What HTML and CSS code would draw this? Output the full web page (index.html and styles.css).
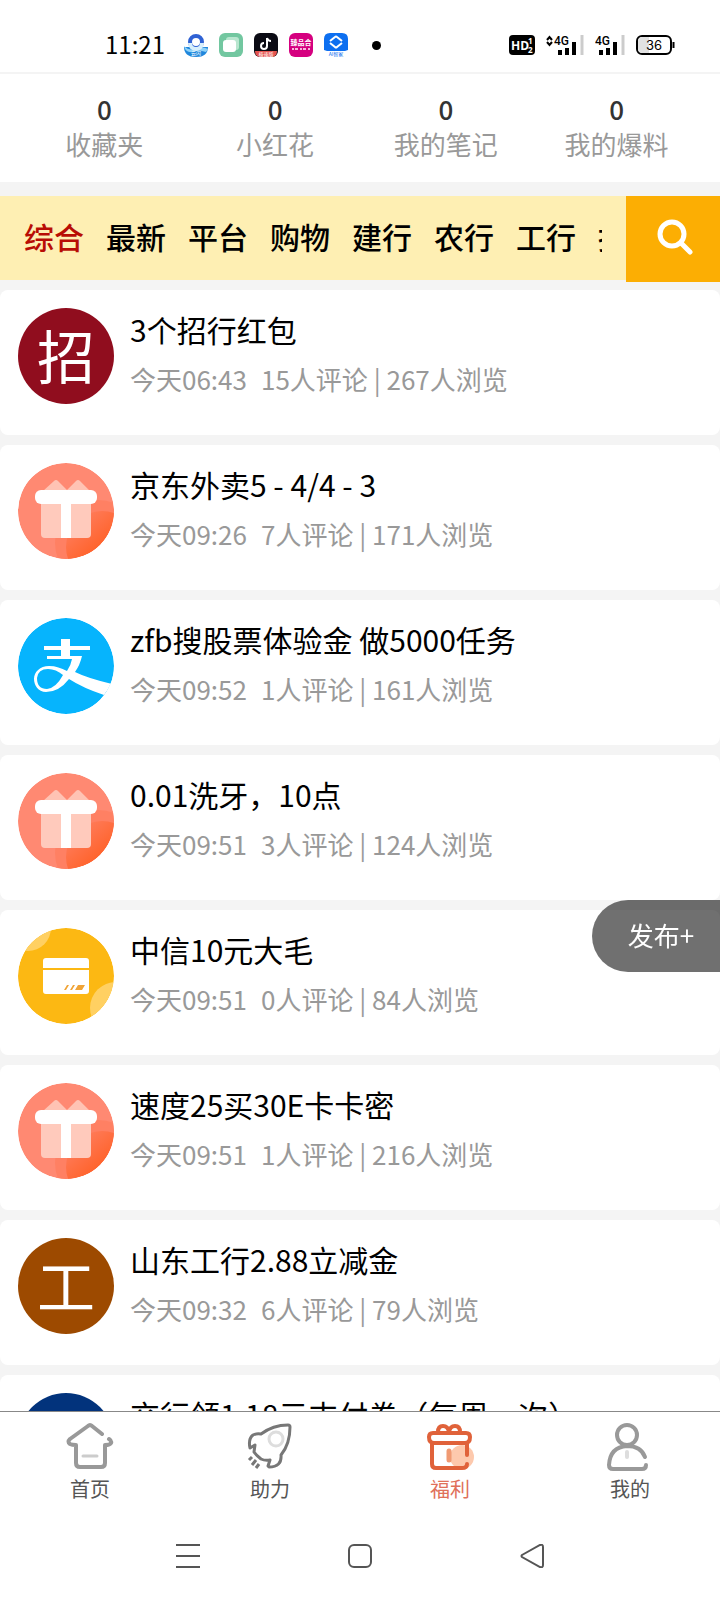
FILE: index.html
```
<!DOCTYPE html>
<html lang="zh-CN">
<head>
<meta charset="utf-8">
<meta name="viewport" content="width=device-width, initial-scale=1">
<title>福利</title>
<link rel="stylesheet" href="styles.css">
</head>
<body>
<svg class="defs" width="0" height="0" aria-hidden="true">
  <linearGradient id="warm" gradientUnits="userSpaceOnUse" x1="56" y1="52" x2="84" y2="84"><stop offset="0" stop-color="#ff8063"/><stop offset="1" stop-color="#ff6229"/></linearGradient>
  <symbol id="gift" viewBox="0 0 96 96">
    <clipPath id="disc"><circle cx="48" cy="48" r="48"/></clipPath>
    <g clip-path="url(#disc)">
      <rect width="96" height="96" fill="#ff8972"/>
      <circle cx="80" cy="80" r="43" fill="#ff8063"/>
      <circle cx="84" cy="84" r="36" fill="url(#warm)"/>
    </g>
    <path d="M25 28 36 18q2-2 4 0l9 9 9-9q2-2 4 0l10 10z" fill="#ffc3b4"/>
    <path d="M23 40h50v31q0 4-4 4H27q-4 0-4-4z" fill="#ffcabc"/>
    <rect x="17" y="27" width="62" height="14" rx="6" fill="#fff"/>
    <path d="M43 40h10v35H43z" fill="#fff"/>
  </symbol>
</svg>
<div class="app">
  <header class="status">
    <time class="clock">11:21</time>
    <div class="apps">
      <svg width="24" height="24" viewBox="0 0 24 24"><path d="M0 14h24q0 10-12 10T0 14z" fill="#1f87dc"/><path d="M0 13q5 5 11 3 8-3 13 0l-2 3q-9-3-12 0-6 1-9-3z" fill="#8fd2f8"/><circle cx="12" cy="9" r="6" fill="none" stroke="#2f62d4" stroke-width="4"/><path d="M6 10a6 6 0 0 0 12 0" fill="none" stroke="#d7effc" stroke-width="4"/><text x="12" y="22" class="tiny">云闪</text></svg>
      <svg width="24" height="24" viewBox="0 0 24 24"><rect width="24" height="24" rx="6" fill="#72c7a0"/><rect x="7" y="4" width="13" height="13" rx="3" fill="#b8e6cf"/><rect x="4" y="7" width="13" height="12" rx="3" fill="#fff"/></svg>
      <svg width="24" height="24" viewBox="0 0 24 24"><rect width="24" height="24" rx="6" fill="#0b0b14"/><path d="M1 18h22q0 6-6 6H7q-6 0-6-6z" fill="#e5544f"/><path d="M13 5v8a3 3 0 1 1-3-3M13 5q1 3 4 3" fill="none" stroke="#fff" stroke-width="2"/><text x="12" y="23" class="tiny">极速版</text></svg>
      <svg width="24" height="24" viewBox="0 0 24 24"><rect width="24" height="24" rx="6" fill="#d5007f"/><text x="12" y="12" class="small">臻品合</text><path d="M3 16h18" stroke="#f7b8dc" stroke-width="2" stroke-dasharray="2 1 3 2"/></svg>
      <svg width="24" height="24" viewBox="0 0 24 24"><path d="M6 0h12q6 0 6 6v11l-3 1H3l-3-1V6q0-6 6-6z" fill="#0d6ff0"/><path d="M6 8l5-4q1-1 2 0l5 4M6 10l5 4q1 1 2 0l5-4" fill="none" stroke="#fff" stroke-width="2"/><text x="12" y="23" class="tiny blue">AI智家</text></svg>
    </div>
    <span class="dot"></span>
    <div class="signals">
      <svg width="26" height="20" viewBox="0 0 26 20"><rect width="26" height="20" rx="4"/><text x="2" y="15" class="hd">HD</text><text x="19" y="9" class="hdnum">1</text><text x="19" y="18" class="hdnum">2</text></svg>
      <svg width="38" height="20" viewBox="0 0 38 20"><path d="M1 5l2.500-3 2.500 3M1 7l2.500 3 2.500-3" fill="none" stroke="#000" stroke-width="2"/><text x="8" y="10" class="net">4G</text><path d="M14 20v-5M21 20v-7M28 20V7" stroke="#000" stroke-width="4"/><path d="M36 20V0" stroke="#ccc" stroke-width="3"/></svg>
      <svg width="30" height="20" viewBox="0 0 30 20"><text x="0" y="10" class="net">4G</text><path d="M6 20v-5M13 20v-7M20 20V7" stroke="#000" stroke-width="4"/><path d="M28 20V0" stroke="#ccc" stroke-width="3"/></svg>
      <svg width="39" height="20" viewBox="0 0 39 20"><rect x="1" y="1" width="34" height="18" rx="5" fill="#fff" stroke="#000" stroke-width="2"/><path d="M7 2h6v16H7q-5 0-5-5V7q0-5 5-5z" fill="#e2e2e2"/><path d="M37.500 7v6" stroke="#000" stroke-width="2"/><text x="18" y="15" class="level">36</text></svg>
    </div>
  </header>

  <section class="stats">
    <a href="#" class="stat"><b>0</b><span>收藏夹</span></a>
    <a href="#" class="stat"><b>0</b><span>小红花</span></a>
    <a href="#" class="stat"><b>0</b><span>我的笔记</span></a>
    <a href="#" class="stat"><b>0</b><span>我的爆料</span></a>
  </section>

  <div class="filter">
    <nav class="tabs">
      <a href="#" class="tab active">综合</a>
      <a href="#" class="tab">最新</a>
      <a href="#" class="tab">平台</a>
      <a href="#" class="tab">购物</a>
      <a href="#" class="tab">建行</a>
      <a href="#" class="tab">农行</a>
      <a href="#" class="tab">工行</a>
      <a href="#" class="tab">招行</a>
    </nav>
    <button class="search" aria-label="搜索">
      <svg width="40" height="40" viewBox="0 0 40 40"><circle cx="19" cy="15" r="12" fill="none" stroke="#fff" stroke-width="5"/><path d="M29 25l8 8" stroke="#fff" stroke-width="5" stroke-linecap="round"/></svg>
    </button>
  </div>

  <main class="list">
    <a href="#" class="card">
      <span class="avatar red">招</span>
      <div class="body"><h2>3个招行红包</h2><p><span>今天06:43</span><span>15人评论 | 267人浏览</span></p></div>
    </a>
    <a href="#" class="card">
      <svg class="avatar"><use href="#gift"/></svg>
      <div class="body"><h2>京东外卖5&nbsp;-&nbsp;4/4&nbsp;-&nbsp;3</h2><p><span>今天09:26</span><span>7人评论 | 171人浏览</span></p></div>
    </a>
    <a href="#" class="card">
      <svg class="avatar" viewBox="0 0 96 96"><circle cx="48" cy="48" r="48" fill="#06b4fd"/><path d="M26 28h17v-7h9v7h20v4H52v6h12q-2 9-7 16 12 6 37 12l-8 11Q65 70 51 61 41 74 28 74C20 74 16 67 16 61c0-7 6-13 15-13 7 0 12 2 18 5q4-6 5-12H29v-3h14v-6H26z" fill="#fff"/><path d="M45 57q-7-6-15-6-10 0-11 9 0 11 10 11 9-1 16-14z" fill="#06b4fd"/></svg>
      <div class="body"><h2>zfb搜股票体验金 做5000任务</h2><p><span>今天09:52</span><span>1人评论 | 161人浏览</span></p></div>
    </a>
    <a href="#" class="card">
      <svg class="avatar"><use href="#gift"/></svg>
      <div class="body"><h2>0.01洗牙，10点</h2><p><span>今天09:51</span><span>3人评论 | 124人浏览</span></p></div>
    </a>
    <a href="#" class="card">
      <svg class="avatar" viewBox="0 0 96 96"><circle cx="48" cy="48" r="48" fill="#fcb813"/><g clip-path="url(#disc)" fill="#ffd062"><circle cx="10" cy="0" r="23"/><circle cx="98" cy="80" r="26"/></g><path d="M28 30h40q3 0 3 3v7H25v-7q0-3 3-3zM25 42h46v21q0 3-3 3H28q-3 0-3-3z" fill="#fff"/><path d="M46 62l3-5h2l-3 5zM52 62l3-5h2l-3 5zM57 62l3-5h7l-3 5z" fill="#f0a437"/></svg>
      <div class="body"><h2>中信10元大毛</h2><p><span>今天09:51</span><span>0人评论 | 84人浏览</span></p></div>
    </a>
    <a href="#" class="card">
      <svg class="avatar"><use href="#gift"/></svg>
      <div class="body"><h2>速度25买30E卡卡密</h2><p><span>今天09:51</span><span>1人评论 | 216人浏览</span></p></div>
    </a>
    <a href="#" class="card">
      <span class="avatar brown">工</span>
      <div class="body"><h2>山东工行2.88立减金</h2><p><span>今天09:32</span><span>6人评论 | 79人浏览</span></p></div>
    </a>
    <a href="#" class="card">
      <span class="avatar navy"></span>
      <div class="body"><h2>交行领1.18元支付券（每周一次）</h2></div>
    </a>
  </main>

  <nav class="tabbar">
    <a href="#" class="item">
      <svg width="48" height="48" viewBox="0 0 48 48" fill="none" stroke="#999" stroke-width="4" stroke-linecap="round" stroke-linejoin="round"><path d="M36 11 26 3q-2-2-4 0L4 16q-3 3 0 5 2 1 6 1v18q0 4 4 4h21q4 0 4-4V22q5 0 6-2 1-2-2-4"/><path d="M17 33h14" stroke="#ccc" stroke-width="3"/></svg>
      <span>首页</span>
    </a>
    <a href="#" class="item">
      <svg width="48" height="48" viewBox="-2 -1 48 48" fill="none" stroke="#777" stroke-width="3" stroke-linecap="round" stroke-linejoin="round"><path d="M13 10Q25 1 40 1q2 0 2 2 0 17-9 28 1 12-12 12l-1-1 2-6q-5 1-9-1Q8 31 6 28l1-7-5 3Q0 15 5 11q4-2 8-1z"/><circle cx="28" cy="15" r="7" stroke="#ddd"/><path d="M4 33l-3 3M8 36l-4 5M11 40l-3 4" stroke-linecap="butt"/></svg>
      <span>助力</span>
    </a>
    <a href="#" class="item current">
      <svg width="48" height="48" viewBox="0 0 48 48" fill="none" stroke="#e0623a" stroke-width="4" stroke-linecap="round" stroke-linejoin="round"><circle cx="36" cy="34" r="12" fill="#fdc9ad" stroke="none"/><path d="M12 9q0-6 5-6t6 6q1-6 6-6t5 6"/><path d="M7 10h33q4 0 4 4 0 6-5 6H8q-5 0-5-6 0-4 4-4z" fill="#fff"/><path d="M6 21v20q0 4 4 4h26q5 0 5-4M41 21v11"/><path d="M23 28v9" stroke="#f09a73" stroke-width="5"/></svg>
      <span>福利</span>
    </a>
    <a href="#" class="item">
      <svg width="48" height="48" viewBox="0 0 48 48" fill="none" stroke="#999" stroke-width="4" stroke-linecap="round" stroke-linejoin="round"><circle cx="21" cy="12" r="10"/><path d="M39 34Q35 23 21 23 4 24 3 42q0 4 4 4h29q4 0 4-4"/><path d="M21 29v5" stroke="#ddd"/></svg>
      <span>我的</span>
    </a>
  </nav>
  <footer class="system">
    <button aria-label="最近任务"><svg width="24" height="24" viewBox="0 0 24 24"><path d="M0 1h24M0 12h24M0 23h24"/></svg></button>
    <button aria-label="主屏幕"><svg width="24" height="24" viewBox="0 0 24 24"><rect x="1" y="1" width="22" height="22" rx="5"/></svg></button>
    <button aria-label="返回"><svg width="24" height="24" viewBox="0 0 24 24"><path d="M2 11 20 1q3-1 3 2v18q0 3-3 2L2 13q-1-1 0-2z"/></svg></button>
  </footer>
  <button class="publish">发布+</button>
</div>
</body>
</html>
```
FILE: styles.css
```
* { box-sizing: border-box; margin: 0; padding: 0; }
body {
  font-family: "Noto Sans CJK SC", sans-serif;
  font-weight: 400;
  background: #f4f4f4;
  color: #000;
}
a { color: inherit; text-decoration: none; }
button { border: 0; background: none; font: inherit; color: inherit; }
svg { display: block; }
.defs { position: absolute; }

.app { height: 100vh; display: flex; flex-direction: column; }

.status {
  flex: none;
  height: 74px;
  padding: 16px 45px 0 105px;
  display: flex;
  align-items: flex-start;
  background: #fff;
  border-bottom: 2px solid #f4f4f4;
}
.status > * { height: 58px; display: flex; align-items: center; }
.status .clock { width: 79px; height: 54px; font-size: 24px; }
.apps { gap: 11px; }
.status .dot { width: 9px; height: 9px; margin: 25px 0 0 24px; border-radius: 50%; background: #000; }
.signals { margin-left: auto; gap: 11px; }
.tiny { font-size: 5px; fill: #fff; text-anchor: middle; }
.small { font-size: 7px; font-weight: 700; fill: #fff; text-anchor: middle; }
.blue { fill: #0d6ff0; }
.hd { font: 700 12px "Open Sans", sans-serif; fill: #fff; }
.hdnum { font: 700 8px "Open Sans", sans-serif; fill: #fff; }
.net { font: 500 12px Roboto, sans-serif; }
.level { font: 400 13px Inter, sans-serif; text-anchor: middle; }

.stats {
  flex: none;
  display: flex;
  padding: 17px 18px 21px 19px;
  background: #fff;
}
.stat { flex: 1; display: flex; flex-direction: column; align-items: center; font-size: 26px; line-height: 35px; color: #999; }
.stat b { font-weight: 500; color: #333; }

.filter { flex: none; display: flex; align-items: flex-start; margin-top: 14px; height: 94px; }
.tabs { flex: 1; min-width: 0; height: 84px; padding: 0 24px; background: #feefb3; display: flex; gap: 22px; overflow: hidden; overflow: clip; overflow-clip-margin: content-box; }
.tab { flex: none; font-size: 30px; line-height: 80px; font-weight: 500; }
.active { color: #b80d05; }
.search { width: 94px; height: 86px; background: #fcae03; display: flex; align-items: center; justify-content: center; }

.list { flex: 1; min-height: 0; overflow: hidden; display: flex; flex-direction: column; gap: 10px; }
.card { flex: none; min-height: 145px; padding: 18px; display: flex; gap: 16px; background: #fff; border-radius: 8px; }
.avatar { flex: none; width: 96px; height: 96px; border-radius: 50%; color: #fff; font-size: 58px; line-height: 92px; text-align: center; }
.red { background: #900d1e; }
.brown { background: #9d4a00; }
.navy { background: #02337c; }
.body { min-width: 0; }
.body h2 { font-size: 30px; line-height: 42px; font-weight: 400; }
.body p { display: flex; gap: 14px; margin-top: 10px; font-size: 26px; line-height: 38px; color: #999; }

.tabbar { flex: none; height: 99px; display: flex; background: #fff; border-top: 1px solid #888; }
.item { flex: 1; display: flex; flex-direction: column; align-items: center; padding-top: 11px; font-size: 20px; line-height: 36px; color: #555; }
.current { color: #e0705a; }

.system { flex: none; height: 90px; display: flex; justify-content: center; gap: 148px; background: #fff; }
.system button { height: 92px; }
.system svg { fill: none; stroke: #555; stroke-width: 2; }

.publish {
  position: fixed;
  right: 0;
  top: 900px;
  width: 128px;
  height: 72px;
  padding: 0 0 4px 10px;
  border-radius: 36px 0 0 36px;
  background: rgba(0, 0, 0, .56);
  color: #fff;
  font-size: 26px;
}
```
